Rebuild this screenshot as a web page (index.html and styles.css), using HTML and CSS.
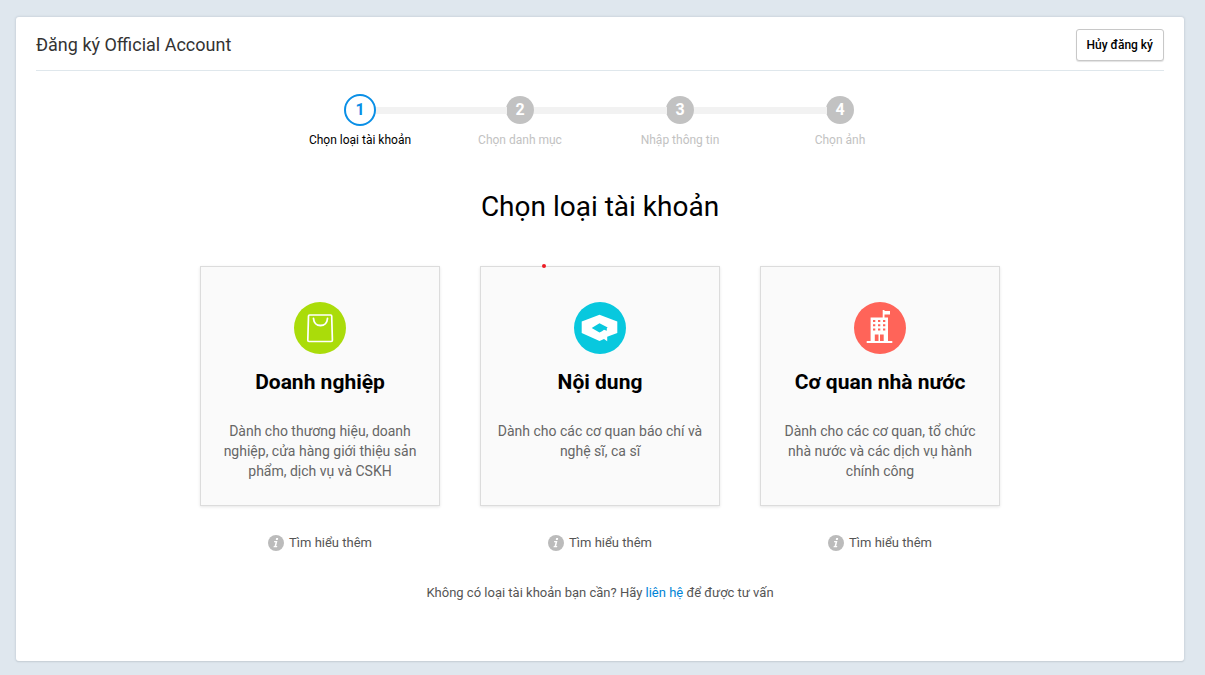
FILE: index.html
```html
<!DOCTYPE html>
<html lang="vi">
<head>
  <meta charset="UTF-8" />
  <meta name="viewport" content="width=device-width, initial-scale=1" />
  <title>Đăng ký Official Account</title>
  <link rel="stylesheet" href="styles.css">
</head>
<body>

  <main class="panel">
    <header class="panel-header">
      <h1>Đăng ký Official Account</h1>
      <button type="button" class="btn-cancel">Hủy đăng ký</button>
    </header>

    <!-- Steps -->
    <ol class="steps">
      <li class="step active"><span class="step-num">1</span><span class="step-name">Chọn loại tài khoản</span></li>
      <li class="step"><span class="step-num">2</span><span class="step-name">Chọn danh mục</span></li>
      <li class="step"><span class="step-num">3</span><span class="step-name">Nhập thông tin</span></li>
      <li class="step"><span class="step-num">4</span><span class="step-name">Chọn ảnh</span></li>
    </ol>

    <h2 class="title">Chọn loại tài khoản</h2>

    <!-- Account types -->
    <div class="types">
      <div class="type">
        <button type="button" class="card">
          <svg class="card-icon" viewBox="0 0 52 52" aria-hidden="true">
            <circle cx="26" cy="26" r="26" fill="#aadc0a" />
            <path d="M15.500 13h21.200q1 0 1 1l.7 24.200q0 1.300-1.200 1.300H15q-1.200 0-1.200-1.300L14.500 14q0-1 1-1z" fill="none" stroke="#fff" stroke-width="1.700" />
            <path d="M19.500 16.500c.3 4 3 7 7 7s6.700-3 7-7" fill="none" stroke="#fff" stroke-width="1.800" stroke-linecap="round" />
          </svg>
          <span class="card-name">Doanh nghiệp</span>
          <span class="card-desc">Dành cho thương hiệu, doanh nghiệp, cửa hàng giới thiệu sản phẩm, dịch vụ và CSKH</span>
        </button>
        <a href="#" class="more">
          <svg class="more-icon" viewBox="0 0 16 16" aria-hidden="true">
            <circle cx="8" cy="8" r="8" fill="#bbb" />
            <path d="M8.200 3h2l-.4 1.900h-2zM6.200 6h3.200l-1.200 5h1.100l-.3 1.300H5.500l.3-1.300h.8l.9-3.700H6z" fill="#fff" />
          </svg>
          <span>Tìm hiểu thêm</span>
        </a>
      </div>

      <div class="type">
        <button type="button" class="card marked">
          <svg class="card-icon" viewBox="0 0 52 52" aria-hidden="true">
            <circle cx="26" cy="26" r="26" fill="#08c8de" />
            <path d="M25.500 12.700L43.300 19.500v11.500L33.200 34.800v4.400L30 37l-4.500 2L7.700 31V19.500z" fill="#fff" />
            <path d="M25.500 21.300L33.700 25.600l-.9.600v2.600l-2.800-1-2 1.400-2.500 1.300L17.700 26z" fill="#08c8de" />
          </svg>
          <span class="card-name">Nội dung</span>
          <span class="card-desc">Dành cho các cơ quan báo chí và nghệ sĩ, ca sĩ</span>
        </button>
        <a href="#" class="more">
          <svg class="more-icon" viewBox="0 0 16 16" aria-hidden="true">
            <circle cx="8" cy="8" r="8" fill="#bbb" />
            <path d="M8.200 3h2l-.4 1.900h-2zM6.200 6h3.200l-1.200 5h1.100l-.3 1.300H5.500l.3-1.300h.8l.9-3.700H6z" fill="#fff" />
          </svg>
          <span>Tìm hiểu thêm</span>
        </a>
      </div>

      <div class="type">
        <button type="button" class="card">
          <svg class="card-icon" viewBox="0 0 52 52" aria-hidden="true">
            <circle cx="26" cy="26" r="26" fill="#ff6459" />
            <path d="M16.600 15.400H28.700V8h1.800v1H36v3.600h-5.500v2.800H34V39h4.300v2H12.700v-2h3.900z" fill="#fff" />
            <path d="M19 18h2.300v2H19zM24 18h2.300v2H24zM29 18h2.300v2H29zM19 22.200h2.300v2H19zM24 22.200h2.300v2H24zM29 22.200h2.300v2H29zM19 26.400h2.300v2H19zM24 26.400h2.300v2H24zM29 26.400h2.300v2H29zM20.800 32.600h3.700V39h-3.700zM26 32.600h3.700V39H26z" fill="#ff6459" />
          </svg>
          <span class="card-name">Cơ quan nhà nước</span>
          <span class="card-desc">Dành cho các cơ quan, tổ chức nhà nước và các dịch vụ hành chính công</span>
        </button>
        <a href="#" class="more">
          <svg class="more-icon" viewBox="0 0 16 16" aria-hidden="true">
            <circle cx="8" cy="8" r="8" fill="#bbb" />
            <path d="M8.200 3h2l-.4 1.900h-2zM6.200 6h3.200l-1.200 5h1.100l-.3 1.300H5.500l.3-1.300h.8l.9-3.700H6z" fill="#fff" />
          </svg>
          <span>Tìm hiểu thêm</span>
        </a>
      </div>
    </div>

    <p class="contact">Không có loại tài khoản bạn cần? Hãy <a href="#">liên hệ</a> để được tư vấn</p>
  </main>

</body>
</html>
```

FILE: styles.css
```css
* {
  box-sizing: border-box;
}

body {
  margin: 0;
  padding: 17px 21px 14px 16px;
  min-height: 100vh;
  display: flex;
  background: #dfe7ee;
  color: #000;
  font-family: Roboto, sans-serif;
  font-size: 13px;
  line-height: 20px;
}

button {
  font-family: inherit;
  cursor: pointer;
}

a {
  color: #0084d6;
  text-decoration: none;
}

.panel {
  flex: 1;
  padding: 0 20px 20px;
  background: #fff;
  border-radius: 3px;
  box-shadow: 0 0 2px 1px #cdd6de, 0 1px 1px rgba(0, 0, 0, 0.15);
}

.panel-header {
  display: flex;
  justify-content: space-between;
  align-items: center;
  height: 54px;
  padding-top: 2px;
  border-bottom: 1px solid #dfe7ec;
}

.panel-header h1 {
  margin: 0;
  color: #333;
  font-size: 18px;
  font-weight: 400;
}

.btn-cancel {
  height: 32px;
  padding: 0 10px;
  background: #fff;
  border: 1px solid #c8c8c8;
  border-radius: 3px;
  box-shadow: 0 1px 1px rgba(0, 0, 0, 0.12);
  color: #000;
  font-size: 12px;
  font-weight: 500;
}

/* Steps */
.steps {
  display: flex;
  justify-content: center;
  margin: 23px 0 0;
  padding: 0;
  list-style: none;
}

.step {
  position: relative;
  width: 160px;
  display: flex;
  flex-direction: column;
  align-items: center;
  gap: 4px;
  color: #c2c2c2;
  font-size: 12px;
}

.step + .step::before {
  content: "";
  position: absolute;
  top: 13px;
  left: -66px;
  right: 93px;
  height: 7px;
  background: #f2f2f2;
}

.step-num {
  width: 28px;
  height: 28px;
  margin: 2px;
  border-radius: 50%;
  background: #c2c2c2;
  color: #fff;
  font-size: 16px;
  font-weight: 700;
  line-height: 28px;
  text-align: center;
}

.step.active {
  color: #000;
}

.step.active .step-num {
  width: 32px;
  height: 32px;
  margin: 0;
  border: 2px solid #0a8fe6;
  background: #fff;
  color: #0a8fe6;
}

.step.active + .step::before {
  left: -64px;
}

.title {
  margin: 37px 0 39px;
  font-size: 28px;
  font-weight: 400;
  line-height: 40px;
  text-align: center;
}

/* Account types */
.types {
  display: flex;
  justify-content: center;
  gap: 40px;
}

.type {
  width: 240px;
  display: flex;
  flex-direction: column;
  align-items: center;
  gap: 27px;
}

.card {
  position: relative;
  width: 100%;
  min-height: 240px;
  padding: 35px 14px 24px;
  display: flex;
  flex-direction: column;
  justify-content: flex-start;
  align-items: center;
  background: #fafafa;
  border: 1px solid #dcdcdc;
  border-radius: 0;
  box-shadow: 0 1px 3px rgba(0, 0, 0, 0.1);
}

.card.marked::after {
  content: "";
  position: absolute;
  top: -3px;
  left: 61px;
  width: 4px;
  height: 4px;
  border-radius: 50%;
  background: #ed1c24;
}

.card-icon {
  width: 52px;
  height: 52px;
}

.card-name {
  margin: 14px 0 25px;
  color: #000;
  font-size: 21px;
  font-weight: 700;
  line-height: 28px;
}

.card-desc {
  color: #666;
  font-size: 14px;
  line-height: 20px;
}

.more {
  display: flex;
  align-items: center;
  gap: 5px;
  color: #555;
}

.more-icon {
  width: 16px;
  height: 16px;
}

.contact {
  margin: 30px 0 0;
  color: #555;
  text-align: center;
}

@media (max-width: 860px) {
  .types {
    flex-wrap: wrap;
  }
}
```
